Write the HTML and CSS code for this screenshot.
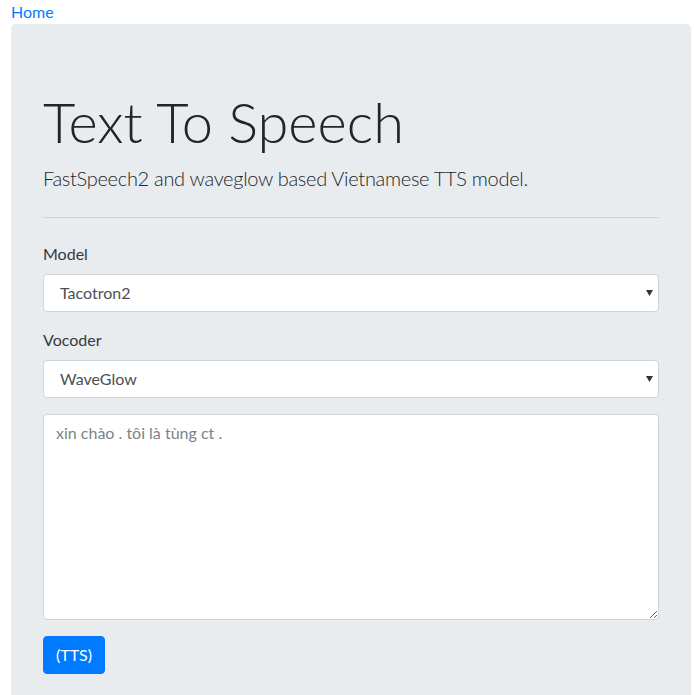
FILE: index.html
```html
<!DOCTYPE html>
<html lang="vi">
<head>
<meta charset="utf-8">
<title>Text To Speech</title>
<link rel="stylesheet" href="styles.css">
</head>
<body>
<div class="page">
  <a class="home" href="#">Home</a>
  <div class="jumbotron">
    <h1 class="display">Text To Speech</h1>
    <p class="lead">FastSpeech2 and waveglow based Vietnamese TTS model.</p>
    <hr class="rule">
    <form class="form">
      <div class="form-group">
        <label class="label" for="model">Model</label>
        <select class="control select" id="model">
          <option>Tacotron2</option>
        </select>
      </div>
      <div class="form-group">
        <label class="label" for="vocoder">Vocoder</label>
        <select class="control select" id="vocoder">
          <option>WaveGlow</option>
        </select>
      </div>
      <div class="form-group">
        <textarea class="control textarea" rows="8" placeholder="xin chào . tôi là tùng ct ."></textarea>
      </div>
      <button class="btn" type="button">(TTS)</button>
    </form>
  </div>
</div>
</body>
</html>
```
FILE: styles.css
```css
* { box-sizing: border-box; }
html, body { margin: 0; padding: 0; }
body {
  font-family: Lato, "Open Sans", "Liberation Sans", sans-serif;
  font-size: 16px;
  line-height: 1.5;
  color: #212529;
  background: #fff;
}
.page {
  padding: 0 3px 0 11px;
}
.home {
  display: block;
  color: #007bff;
  text-decoration: none;
  line-height: 24px;
  height: 24px;
}
.jumbotron {
  background: #e9ecef;
  border-radius: 5px;
  padding: 64px 32px;
  margin-bottom: 32px;
}
.display {
  margin: 0 0 8px;
  font-size: 56px;
  font-weight: 300;
  line-height: 1.2;
}
.lead {
  margin: 0 0 16px;
  font-size: 20px;
  font-weight: 300;
  line-height: 1.5;
  letter-spacing: -0.3px;
  color: #212529;
}
.rule {
  margin: 24px 0;
  border: 0;
  border-top: 1px solid rgba(0, 0, 0, 0.1);
}
.form { margin: 0; }
.form-group { margin-bottom: 16px; }
.label {
  display: inline-block;
  margin-bottom: 8px;
  line-height: 24px;
  color: #343a40;
}
.control {
  display: block;
  width: 100%;
  font-family: inherit;
  font-size: 16px;
  line-height: 24px;
  color: #495057;
  background-color: #fff;
  border: 1px solid #ced4da;
  border-radius: 4px;
  margin: 0;
}
.select {
  height: 38px;
  padding: 6px 12px 6px 16px;
  -webkit-appearance: none;
  appearance: none;
  background-image: url("data:image/svg+xml,%3Csvg xmlns='http://www.w3.org/2000/svg' width='7' height='6' viewBox='0 0 7 6'%3E%3Cpath d='M0 0h7L3.5 6z' fill='%23333'/%3E%3C/svg%3E");
  background-repeat: no-repeat;
  background-position: right 5px center;
  background-size: 7px 6px;
}
.textarea {
  height: 206px;
  padding: 6px 12px;
  resize: vertical;
}
.textarea::placeholder { color: #7b838a; opacity: 1; }
.btn {
  display: inline-block;
  font-family: inherit;
  font-size: 16px;
  line-height: 24px;
  padding: 6px 12px;
  color: #fff;
  background: #007bff;
  border: 1px solid #007bff;
  border-radius: 4px;
  height: 38px;
}
```
